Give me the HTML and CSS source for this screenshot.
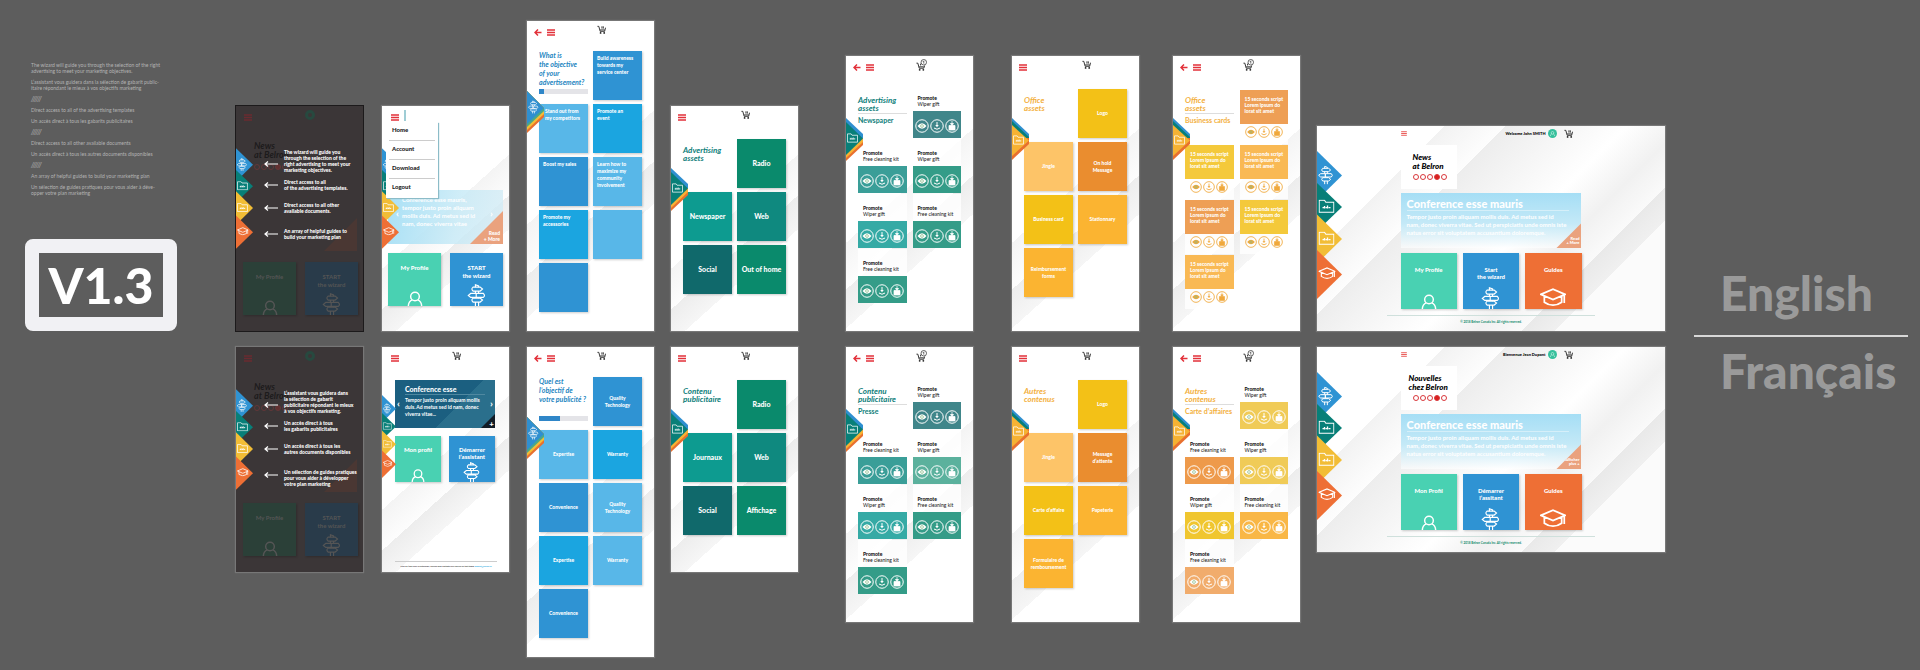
FILE: index.html
```html
<!DOCTYPE html>
<html lang="en">
<head>
<meta charset="utf-8">
<title>Belron screens V1.3</title>
<link rel="stylesheet" href="styles.css">
</head>
<body>
<svg class="defs" aria-hidden="true">
  <symbol id="burger" viewBox="0 0 16 14"><path d="M0 2h16M0 7h16M0 12h16" stroke="currentColor" stroke-width="2.6"/></symbol>
  <symbol id="back" viewBox="0 0 16 14"><path d="M15 7H3M8 1 2 7l6 6" fill="none" stroke="currentColor" stroke-width="3"/></symbol>
  <symbol id="cart" viewBox="0 0 20 20"><path d="M1 3h3l3 11h10l2-8M7 11h10M11 3v5M14 3v5" fill="none" stroke="currentColor" stroke-width="2"/><circle cx="8" cy="17.500" r="2" fill="currentColor"/><circle cx="16" cy="17.500" r="2" fill="currentColor"/></symbol>
  <symbol id="cartfull" viewBox="0 0 24 26"><path d="M1 9h3l3 11h10l2-6M7 17h10M10 10v4" fill="none" stroke="currentColor" stroke-width="2"/><circle cx="8" cy="23.500" r="2" fill="currentColor"/><circle cx="16" cy="23.500" r="2" fill="currentColor"/><circle cx="17" cy="7" r="6" fill="#fff" stroke="currentColor" stroke-width="1.500"/><path d="M15 6l2-2v6" fill="none" stroke="currentColor" stroke-width="1.400"/></symbol>
  <symbol id="sign" viewBox="0 0 24 28"><g fill="none" stroke="currentColor" stroke-width="1.500"><path d="M10 4V1l4 1.500V4M10 9v3M14 9v3M10 18v0M14 17v1M10 23v5M14 23v5"/><path d="M7 4h9l3 2.500L16 9H7q-3-2.500 0-5zM11 17H4l-3-2.500L4 12h7v5M11 12h9q3 2.500 0 5h-9zM16 18H7q-3 2.500 0 5h9l3-2.500z"/></g></symbol>
  <symbol id="person" viewBox="0 0 24 22"><g fill="none" stroke="currentColor" stroke-width="2.200"><circle cx="12" cy="8" r="6.500"/><path d="M2 23q0-8 6-10M22 23q0-8-6-10"/></g></symbol>
  <symbol id="cap" viewBox="0 0 30 22"><g fill="none" stroke="currentColor" stroke-width="2"><path d="M1 8 15 2l14 6-14 6zM5 10v7q10 7 20 0v-7M28 8v10"/></g></symbol>
  <symbol id="folder" viewBox="0 0 24 20"><path d="M1 19V1h8l2 3h12v15z" fill="none" stroke="currentColor" stroke-width="1.600"/><path d="M6 12h3M10.500 12h3M15 12h3M9 9.500v4M13.500 9v4.500" stroke="currentColor" stroke-width="2"/></symbol>
  <symbol id="pointer" viewBox="0 0 28 12"><path d="M28 6H2M8 1 2 6l6 5" fill="none" stroke="currentColor" stroke-width="2.400"/></symbol>
  <symbol id="eye" viewBox="0 0 28 28"><circle cx="14" cy="14" r="12.500" fill="none" stroke="currentColor" stroke-width="2"/><path d="M5 14q9-11 18 0-9 11-18 0z" fill="currentColor"/><circle cx="14" cy="14" r="2.800" fill="none" stroke="#8b8" stroke-width="1.500"/></symbol>
  <symbol id="down" viewBox="0 0 28 28"><circle cx="14" cy="14" r="12.500" fill="none" stroke="currentColor" stroke-width="2"/><path d="M14 6v8M8 18q6 5 12 0" fill="none" stroke="currentColor" stroke-width="2"/><path d="M10.500 12h7L14 16.500z" fill="currentColor"/></symbol>
  <symbol id="bag" viewBox="0 0 28 28"><circle cx="14" cy="14" r="12.500" fill="none" stroke="currentColor" stroke-width="2"/><path d="M8 13h12v9H8zM14 4v6M11 9h6l-3 4z" fill="currentColor" stroke="currentColor" stroke-width="1.500"/></symbol>
  <symbol id="flags" viewBox="0 0 50 296">
    <path d="M0 0 50 49 0 98z" fill="#2f93d3"/><path d="M0 64 50 112 0 160z" fill="#087f78"/><path d="M0 127 50 176 0 225z" fill="#f2bd36"/><path d="M0 198 50 247 0 296z" fill="#ee6f35"/>
    <g color="#fff"><use href="#sign" x="2" y="29" width="32" height="38"/><use href="#folder" x="3" y="97" width="32" height="27"/><use href="#folder" x="3" y="161" width="32" height="27"/><use href="#cap" x="3" y="231" width="34" height="26"/></g>
  </symbol>
  <symbol id="flag-wizard" viewBox="0 0 17 43"><path d="M0 0 17 17v9L0 42z" fill="#e8702f"/><path d="M0 0 17 17v6L0 39z" fill="#f3bd35"/><path d="M0 0 17 17v3L0 36z" fill="#4aa888"/><path d="M0 0 17 17 0 33z" fill="#2f8fd0"/><use href="#sign" x="1" y="9" width="11" height="14" color="#fff"/></symbol>
  <symbol id="flag-ads" viewBox="0 0 17 43"><path d="M0 0 17 16v4H0z" fill="#2f8fd0"/><path d="M0 20h17v7L0 43z" fill="#e8702f"/><path d="M0 20h17v4L0 40z" fill="#f9b233"/><path d="M0 4 17 20.500 0 37z" fill="#087f78"/><use href="#folder" x="1" y="15" width="11" height="10" color="#fff"/></symbol>
  <symbol id="flag-office" viewBox="0 0 17 43"><path d="M0 0 17 16v6H0z" fill="#2f8fd0"/><path d="M0 3 17 19v4H0z" fill="#087f78"/><path d="M0 20h17v6L0 42z" fill="#e8702f"/><path d="M0 7 17 22.500 0 38z" fill="#f6b233"/><use href="#folder" x="1" y="17" width="11" height="10" color="#fff"/></symbol>
</svg>

<main class="canvas">
  <section class="intro">
    <div class="notes">
      <p>The wizard will guide you through the selection of the right<br>advertising to meet your marketing objectives.</p>
      <p>L’assistant vous guidera dans la sélection de gabarit public-<br>itaire répondant le mieux à vos objectifs marketing</p>
      <p class="slashes">//////</p>
      <p>Direct access to all of the advertising templates</p>
      <p>Un accès direct à tous les gabarits publicitaires</p>
      <p class="slashes">//////</p>
      <p>Direct access to all other available documents</p>
      <p>Un accès direct à tous les autres documents disponibles</p>
      <p class="slashes">//////</p>
      <p>An array of helpful guides to build your marketing plan</p>
      <p>Un sélection de guides pratiques pour vous aider à déve-<br>opper votre plan marketing</p>
    </div>
    <h1 class="version">V1.3</h1>
  </section>

  <article class="board phone dark dark-en indent-l">
    <header class="bar"><button aria-label="Menu"><svg><use href="#burger"/></svg></button><span class="avatar"></span></header>
    <div class="dim">
      <h2>News<br>at Belron</h2><p class="dots"><i></i><i></i><i></i><i class="on"></i><i></i></p>
      <span class="corner"></span>
      <div class="duo"><a href="#" class="tile mint">My Profile<svg class="person"><use href="#person"/></svg></a><a href="#" class="tile blue">START<br>the wizard<svg class="sign"><use href="#sign"/></svg></a></div>
    </div>
    <ul class="guide">
      <li><svg><use href="#pointer"/></svg><p>The wizard will guide you<br>through the selection of the<br>right advertising to meet your<br>marketing objectives.</p></li>
      <li><svg><use href="#pointer"/></svg><p>Direct access to all<br>of the advertising templates.</p></li>
      <li><svg><use href="#pointer"/></svg><p>Direct access to all other<br>available documents.</p></li>
      <li><svg><use href="#pointer"/></svg><p>An array of helpful guides to<br>build your marketing plan</p></li>
    </ul>
    <svg class="flags"><use href="#flags"/></svg>
  </article>

  <article class="board phone indent-2">
    <header class="bar home"><button aria-label="Menu"><svg><use href="#burger"/></svg></button><span class="mark"></span></header>
    <section class="hero light">
      <p>Conference esse mauris,<br>tempor justo proin aliquam<br>mollis duis. Ad metus sed id<br>nam, donec viverra vitae</p>
      <button class="prev" aria-label="Previous">‹</button><button class="next" aria-label="Next">›</button>
      <a href="#" class="more">Read<br>+ More</a>
    </section>
    <div class="duo"><a href="#" class="tile mint">My Profile<svg class="person"><use href="#person"/></svg></a><a href="#" class="tile blue">START<br>the wizard<svg class="sign"><use href="#sign"/></svg></a></div>
    <svg class="flags"><use href="#flags"/></svg>
    <nav class="menu"><a href="#">Home</a><a href="#">Account</a><a href="#">Download</a><a href="#">Logout</a></nav>
  </article>

  <article class="board phone tall indent-1">
    <header class="bar"><button aria-label="Back"><svg><use href="#back"/></svg></button><button aria-label="Menu"><svg><use href="#burger"/></svg></button><button class="cart" aria-label="Cart"><svg><use href="#cart"/></svg></button></header>
    <div class="tiles question">
      <div class="head"><h2>What is<br>the objective<br>of your<br>advertisement?</h2><progress max="100" value="11"></progress></div>
      <a href="#" class="tile blue">Build awareness<br>towards my<br>service center</a>
      <a href="#" class="tile pale inset">Stand out from<br>my competitors</a><a href="#" class="tile cyan">Promote an<br>event</a>
      <a href="#" class="tile blue">Boost my sales</a><a href="#" class="tile pale">Learn how to<br>maximize my<br>community<br>involvement</a>
      <a href="#" class="tile cyan">Promote my<br>accessories</a><a href="#" class="tile pale"></a>
      <a href="#" class="tile blue"></a>
    </div>
    <svg class="flag low"><use href="#flag-wizard"/></svg>
  </article>

  <article class="board phone">
    <header class="bar"><button aria-label="Menu"><svg><use href="#burger"/></svg></button><button class="cart" aria-label="Cart"><svg><use href="#cart"/></svg></button></header>
    <div class="tiles big">
      <div class="head teal"><h2>Advertising<br>assets</h2></div><a href="#" class="tile g1">Radio</a>
      <a href="#" class="tile g2">Newspaper</a><a href="#" class="tile g3">Web</a>
      <a href="#" class="tile g4">Social</a><a href="#" class="tile g1">Out of home</a>
    </div>
    <svg class="flag"><use href="#flag-ads"/></svg>
  </article>

  <article class="board phone mid indent-m">
    <header class="bar"><button aria-label="Back"><svg><use href="#back"/></svg></button><button aria-label="Menu"><svg><use href="#burger"/></svg></button><button class="cart full" aria-label="Cart, 1 item"><svg><use href="#cartfull"/></svg></button></header>
    <div class="cards">
      <div class="head teal"><h2>Advertising<br>assets</h2><h3>Newspaper</h3></div>
      <div class="promo p1"><p><b>Promote</b><br>Wiper gift</p><div class="actions"></div></div>
      <div class="promo p2"><p><b>Promote</b><br>Free cleaning kit</p><div class="actions"></div></div>
      <div class="promo p3"><p><b>Promote</b><br>Wiper gift</p><div class="actions"></div></div>
      <div class="promo p4"><p><b>Promote</b><br>Wiper gift</p><div class="actions"></div></div>
      <div class="promo p3"><p><b>Promote</b><br>Free cleaning kit</p><div class="actions"></div></div>
      <div class="promo p3"><p><b>Promote</b><br>Free cleaning kit</p><div class="actions"></div></div>
    </div>
    <svg class="flag"><use href="#flag-ads"/></svg>
  </article>

  <article class="board phone mid indent-s">
    <header class="bar"><button aria-label="Menu"><svg><use href="#burger"/></svg></button><button class="cart" aria-label="Cart"><svg><use href="#cart"/></svg></button></header>
    <div class="tiles">
      <div class="head amber"><h2>Office<br>assets</h2></div><a href="#" class="tile o1">Logo</a>
      <a href="#" class="tile o2">Jingle</a><a href="#" class="tile o3">On hold<br>Message</a>
      <a href="#" class="tile o1">Business card</a><a href="#" class="tile o4">Stationnary</a>
      <a href="#" class="tile o4">Reimbursement<br>forms</a>
    </div>
    <svg class="flag"><use href="#flag-office"/></svg>
  </article>

  <article class="board phone mid indent-xs">
    <header class="bar"><button aria-label="Back"><svg><use href="#back"/></svg></button><button aria-label="Menu"><svg><use href="#burger"/></svg></button><button class="cart full" aria-label="Cart, 1 item"><svg><use href="#cartfull"/></svg></button></header>
    <div class="cards scripts">
      <div class="head amber"><h2>Office<br>assets</h2><h3>Business cards</h3></div>
      <div class="script s1"><p>15 seconds script<br>Lorem ipsum do<br>lorat sit amet</p><div class="actions"></div></div>
      <div class="script s2"><p>15 seconds script<br>Lorem ipsum do<br>lorat sit amet</p><div class="actions"></div></div>
      <div class="script s3"><p>15 seconds script<br>Lorem ipsum do<br>lorat sit amet</p><div class="actions"></div></div>
      <div class="script s1"><p>15 seconds script<br>Lorem ipsum do<br>lorat sit amet</p><div class="actions"></div></div>
      <div class="script s2"><p>15 seconds script<br>Lorem ipsum do<br>lorat sit amet</p><div class="actions"></div></div>
      <div class="script s3"><p>15 seconds script<br>Lorem ipsum do<br>lorat sit amet</p><div class="actions"></div></div>
    </div>
    <svg class="flag"><use href="#flag-office"/></svg>
  </article>

  <article class="board desktop">
    <header class="topbar"><button class="red" aria-label="Menu"><svg><use href="#burger"/></svg></button><span class="hello">Welcome John SMITH</span><span class="avatar"><svg><use href="#person"/></svg></span><button class="cart" aria-label="Cart"><svg><use href="#cart"/></svg></button></header>
    <div class="news"><h2>News<br>at Belron</h2><p class="dots"><i></i><i></i><i></i><i class="on"></i><i></i></p></div>
    <section class="wide">
      <h3>Conference esse mauris</h3>
      <p>Tempor justo proin aliquam mollis duis. Ad metus sed id<br>nam, donec viverra vitae. Sed ut perspiciatis unde omnis iste<br>natus error sit voluptatem accusantium doloremque.</p>
      <a href="#" class="more">Read<br>+ More</a>
    </section>
    <div class="trio"><a href="#" class="tile mint">My Profile<svg class="person"><use href="#person"/></svg></a><a href="#" class="tile blue">Start<br>the wizard<svg class="sign"><use href="#sign"/></svg></a><a href="#" class="tile orange">Guides<svg class="cap"><use href="#cap"/></svg></a></div>
    <footer>© 2018 Belron Canada Inc. All rights reserved.</footer>
    <svg class="flags"><use href="#flags"/></svg>
  </article>

  <section class="languages">
    <h2>English</h2>
    <hr>
    <h2 lang="fr">Français</h2>
  </section>

  <article class="board phone dark indent-l row-start" lang="fr">
    <header class="bar"><button aria-label="Menu"><svg><use href="#burger"/></svg></button><span class="avatar"></span></header>
    <div class="dim">
      <h2>News<br>at Belron</h2><p class="dots"><i></i><i></i><i></i><i class="on"></i><i></i></p>
      <span class="corner"></span>
      <div class="duo"><a href="#" class="tile mint">My Profile<svg class="person"><use href="#person"/></svg></a><a href="#" class="tile blue">START<br>the wizard<svg class="sign"><use href="#sign"/></svg></a></div>
    </div>
    <ul class="guide">
      <li><svg><use href="#pointer"/></svg><p>L’assistant vous guidera dans<br>la sélection de gabarit<br>publicitaire répondant le mieux<br>à vos objectifs marketing.</p></li>
      <li><svg><use href="#pointer"/></svg><p>Un accès direct à tous<br>les gabarits publicitaires</p></li>
      <li><svg><use href="#pointer"/></svg><p>Un accès direct à tous les<br>autres documents disponibles</p></li>
      <li><svg><use href="#pointer"/></svg><p>Un sélection de guides pratiques<br>pour vous aider à développer<br>votre plan marketing</p></li>
    </ul>
    <svg class="flags"><use href="#flags"/></svg>
  </article>

  <article class="board phone compact indent-2" lang="fr">
    <header class="bar home"><button aria-label="Menu"><svg><use href="#burger"/></svg></button><button class="cart" aria-label="Panier"><svg><use href="#cart"/></svg></button></header>
    <section class="hero deep">
      <h3>Conference esse</h3>
      <p>Tempor justo proin aliquam mollis<br>duis. Ad metus sed id nam, donec<br>viverra vitae...</p>
      <button class="prev" aria-label="Précédent">‹</button><button class="next" aria-label="Suivant">›</button>
      <a href="#" class="more" aria-label="Afficher plus">+</a>
    </section>
    <div class="duo"><a href="#" class="tile mint">Mon profil<svg class="person"><use href="#person"/></svg></a><a href="#" class="tile blue">Démarrer<br>l’assistant<svg class="sign"><use href="#sign"/></svg></a></div>
    <footer>Pour de l’aide avec la plateforme, veuillez nous contacter par courriel en tout temps <a href="#">support@belron.ca</a></footer>
    <svg class="flags"><use href="#flags"/></svg>
  </article>

  <article class="board phone tall indent-1" lang="fr">
    <header class="bar"><button aria-label="Retour"><svg><use href="#back"/></svg></button><button aria-label="Menu"><svg><use href="#burger"/></svg></button><button class="cart" aria-label="Panier"><svg><use href="#cart"/></svg></button></header>
    <div class="tiles">
      <div class="head quiz"><h2>Quel est<br>l’objectif de<br>votre publicité ?</h2><progress max="100" value="42"></progress></div><a href="#" class="tile blue">Quality<br>Technology</a>
      <a href="#" class="tile pale">Expertise</a><a href="#" class="tile cyan">Warranty</a>
      <a href="#" class="tile blue">Convenience</a><a href="#" class="tile pale">Quality<br>Technology</a>
      <a href="#" class="tile cyan">Expertise</a><a href="#" class="tile pale">Warranty</a>
      <a href="#" class="tile blue">Convenience</a>
    </div>
    <svg class="flag low"><use href="#flag-wizard"/></svg>
  </article>

  <article class="board phone" lang="fr">
    <header class="bar"><button aria-label="Menu"><svg><use href="#burger"/></svg></button><button class="cart" aria-label="Panier"><svg><use href="#cart"/></svg></button></header>
    <div class="tiles big">
      <div class="head teal"><h2>Contenu<br>publicitaire</h2></div><a href="#" class="tile g1">Radio</a>
      <a href="#" class="tile g2">Journaux</a><a href="#" class="tile g3">Web</a>
      <a href="#" class="tile g4">Social</a><a href="#" class="tile g1">Affichage</a>
    </div>
    <svg class="flag"><use href="#flag-ads"/></svg>
  </article>

  <article class="board phone mid indent-m" lang="fr">
    <header class="bar"><button aria-label="Retour"><svg><use href="#back"/></svg></button><button aria-label="Menu"><svg><use href="#burger"/></svg></button><button class="cart full" aria-label="Panier, 1 article"><svg><use href="#cartfull"/></svg></button></header>
    <div class="cards">
      <div class="head teal"><h2>Contenu<br>publicitaire</h2><h3>Presse</h3></div>
      <div class="promo p1"><p><b>Promote</b><br>Wiper gift</p><div class="actions"></div></div>
      <div class="promo p2"><p><b>Promote</b><br>Free cleaning kit</p><div class="actions"></div></div>
      <div class="promo p5"><p><b>Promote</b><br>Wiper gift</p><div class="actions"></div></div>
      <div class="promo p4"><p><b>Promote</b><br>Wiper gift</p><div class="actions"></div></div>
      <div class="promo p3"><p><b>Promote</b><br>Free cleaning kit</p><div class="actions"></div></div>
      <div class="promo p3"><p><b>Promote</b><br>Free cleaning kit</p><div class="actions"></div></div>
    </div>
    <svg class="flag"><use href="#flag-ads"/></svg>
  </article>

  <article class="board phone mid indent-s" lang="fr">
    <header class="bar"><button aria-label="Menu"><svg><use href="#burger"/></svg></button><button class="cart" aria-label="Panier"><svg><use href="#cart"/></svg></button></header>
    <div class="tiles">
      <div class="head amber"><h2>Autres<br>contenus</h2></div><a href="#" class="tile o1">Logo</a>
      <a href="#" class="tile o2">Jingle</a><a href="#" class="tile o3">Message<br>d’attente</a>
      <a href="#" class="tile o1">Carte d’affaire</a><a href="#" class="tile o4">Papeterie</a>
      <a href="#" class="tile o4">Formulaire de<br>remboursement</a>
    </div>
    <svg class="flag"><use href="#flag-office"/></svg>
  </article>

  <article class="board phone mid indent-xs" lang="fr">
    <header class="bar"><button aria-label="Retour"><svg><use href="#back"/></svg></button><button aria-label="Menu"><svg><use href="#burger"/></svg></button><button class="cart full" aria-label="Panier, 1 article"><svg><use href="#cartfull"/></svg></button></header>
    <div class="cards">
      <div class="head amber"><h2>Autres<br>contenus</h2><h3>Carte d’affaires</h3></div>
      <div class="promo y1"><p><b>Promote</b><br>Wiper gift</p><div class="actions"></div></div>
      <div class="promo y2"><p><b>Promote</b><br>Free cleaning kit</p><div class="actions"></div></div>
      <div class="promo y1"><p><b>Promote</b><br>Wiper gift</p><div class="actions"></div></div>
      <div class="promo y3"><p><b>Promote</b><br>Wiper gift</p><div class="actions"></div></div>
      <div class="promo y4"><p><b>Promote</b><br>Free cleaning kit</p><div class="actions"></div></div>
      <div class="promo y5"><p><b>Promote</b><br>Free cleaning kit</p><div class="actions"></div></div>
    </div>
    <svg class="flag"><use href="#flag-office"/></svg>
  </article>

  <article class="board desktop" lang="fr">
    <header class="topbar"><button class="red" aria-label="Menu"><svg><use href="#burger"/></svg></button><span class="hello">Bienvenue Jean Dupont</span><span class="avatar"><svg><use href="#person"/></svg></span><button class="cart" aria-label="Panier"><svg><use href="#cart"/></svg></button></header>
    <div class="news longer"><h2>Nouvelles<br>chez Belron</h2><p class="dots"><i></i><i></i><i></i><i class="on"></i><i></i></p></div>
    <section class="wide">
      <h3>Conference esse mauris</h3>
      <p>Tempor justo proin aliquam mollis duis. Ad metus sed id<br>nam, donec viverra vitae. Sed ut perspiciatis unde omnis iste<br>natus error sit voluptatem accusantium doloremque.</p>
      <a href="#" class="more">Afficher<br>plus +</a>
    </section>
    <div class="trio"><a href="#" class="tile mint">Mon Profil<svg class="person"><use href="#person"/></svg></a><a href="#" class="tile blue">Démarrer<br>l’assitant<svg class="sign"><use href="#sign"/></svg></a><a href="#" class="tile orange">Guides<svg class="cap"><use href="#cap"/></svg></a></div>
    <footer>© 2018 Belron Canada Inc. All rights reserved.</footer>
    <svg class="flags"><use href="#flags"/></svg>
  </article>
</main>
<script src="script.js"></script>
</body>
</html>
```
FILE: script.js
```js
// Every card carries the same three actions: preview, download, order.
const actions = [['eye', 'Preview'], ['down', 'Download'], ['bag', 'Order']];
document.querySelectorAll('.actions').forEach((row) => {
  row.innerHTML = actions
    .map(([icon, label]) => `<button aria-label="${label}"><svg><use href="#${icon}"/></svg></button>`)
    .join('');
});
```
FILE: styles.css
```css
* { box-sizing: border-box; margin: 0; padding: 0; }
body { background: #5d5d5d; font-family: Lato, "Liberation Sans", sans-serif; min-height: 100vh; }
a { color: inherit; text-decoration: none; }
button { display: block; border: 0; background: none; color: inherit; font: inherit; line-height: 1; }
svg { display: block; }
ul { list-style: none; }
.defs { position: absolute; width: 0; height: 0; }

.canvas {
  display: grid;
  grid-template-columns:
    minmax(0, 152fr) minmax(0, 169fr) minmax(0, 129fr) minmax(0, 128fr) minmax(0, 127fr)
    minmax(0, 158fr) minmax(0, 149fr) minmax(0, 144fr) minmax(0, 348fr) minmax(0, 226fr);
  grid-template-rows: auto auto;
  gap: 16px 17px;
  padding: 21px 12px 14px 25px;
}
.intro { grid-area: 1 / 1; display: flex; flex-direction: column; justify-content: space-between; padding-top: 41px; }
.languages { grid-area: 1 / 10 / 3 / 11; align-self: center; margin-left: 12px; padding-bottom: 14px; }
.indent-l { margin-left: 42px; }
.indent-m { margin-left: 31px; }
.indent-s { margin-left: 22px; }
.indent-xs { margin-left: 17px; }
.indent-2 { margin-left: 2px; }
.indent-1 { margin-left: 1px; }

.notes { display: grid; gap: 5px; padding-left: 6px; color: #b4b4b4; font-size: 5px; line-height: 6px; white-space: nowrap; }
.slashes { font-size: 7px; font-style: italic; }
.version { border: 14px solid #f1f1f4; border-radius: 8px; color: #fff; font-size: 50px; font-weight: 900; line-height: 64px; text-align: center; }
.languages h2 { padding-left: 26px; color: #9a9a9a; font-size: 48px; font-weight: 900; line-height: 56px; }
.languages hr { height: 2px; margin: 14px 0 6px; border: 0; background: #d8d8d8; }

.board {
  position: relative;
  align-self: start;
  overflow: hidden;
  box-shadow: 0 0 1px 1px #777;
  background: linear-gradient(138deg, #fff 48%, #f4f4f4 48%, #fdfdfd 60%, #ededed 60%, #f6f6f6 70%, #fff 70%);
}
.board:nth-of-type(-n+8) { align-self: end; }
.row-start { grid-column: 2; }
.phone { min-height: 225px; }
.phone.mid { min-height: 275px; }
.phone.tall { min-height: 310px; padding-bottom: 14px; }

.bar { display: flex; gap: 5px; height: 17px; padding: 6px 7px 0; color: #e2313a; }
.bar svg { width: 8px; height: 7px; }
.bar.home { padding-left: 9px; }
.bar .cart { position: absolute; left: 55%; top: 4px; }
.cart { color: #222; }
.bar .cart svg, .topbar .cart svg { width: 9px; height: 9px; }
.bar .cart.full { top: 3px; }
.bar .cart.full svg { width: 11px; height: 12px; }
.mark { width: 2px; height: 11px; margin-top: -2px; background: #9fcdd5; }

.tile { display: flex; flex-direction: column; align-items: center; justify-content: center; aspect-ratio: 1; color: #fff; font-size: 5px; font-weight: 900; line-height: 7px; text-align: center; box-shadow: 1px 1px 2px #0003; }
.blue { background: #2f93d3; }
.pale { background: #58b7e8; }
.cyan { background: #1ba5e0; }
.mint { background: #49d1b2; }
.orange { background: #ee6f35; }
.g1 { background: #0a8a6c; }
.g2 { background: #0d9b90; }
.g3 { background: #0f897f; }
.g4 { background: #10696b; }
.o1 { background: #f3c117; }
.o2 { background: #fdc468; }
.o3 { background: #ea8d2f; }
.o4 { background: #fbb431; }

.tiles { display: grid; grid-template-columns: 1fr 1fr; gap: 4px 5px; padding: 16px 12px 0; }
.big .tile { font-size: 7px; }
.tall .tiles { padding-top: 13px; }
.question .tile { align-items: flex-start; justify-content: flex-start; padding: 4px; text-align: left; }
.question .inset { padding-left: 6px; }
.head { color: #2686bf; white-space: nowrap; }
.tiles .head { padding-top: 7px; }
.head h2 { font-size: 8px; font-style: italic; font-weight: 700; line-height: 8px; }
.head h3 { margin-top: 1px; padding-top: 2px; border-top: 1px solid #ddd; font-size: 7px; line-height: 9px; }
.head.teal { color: #0f807b; }
.head.amber { color: #f3b03e; }
.tall .tiles .head { padding-top: 0; }
.question .head h2 { font-size: 7px; line-height: 9px; }
.quiz h2 { margin-bottom: 12px; font-size: 7px; line-height: 9px; }
progress { display: block; width: 100%; height: 5px; margin-top: 2px; border: 0; appearance: none; }
progress::-webkit-progress-bar { background: #e4e4e8; }
progress::-webkit-progress-value { background: #2f86c8; }

.cards { display: grid; grid-template-columns: 1fr 1fr; gap: 1px 6px; padding: 11px 12px 0; }
.cards .head { padding-top: 12px; }
.promo { display: flex; flex-direction: column; height: 54px; color: #111; background: #fffc; font-size: 5px; line-height: 6px; white-space: nowrap; }
.promo p { flex: 1; padding: 11px 0 0 5px; }
.promo b { font-weight: 900; }
.actions { display: flex; align-items: center; justify-content: center; gap: 1px; color: #fff; }
.actions svg { width: 14px; height: 14px; }
.promo .actions { height: 27px; padding-top: 2px; background: var(--tone); }
.p1 { --tone: #40868a; }
.p2 { --tone: #3a9e98; }
.p3 { --tone: #349c88; }
.p4 { --tone: #35aaa5; }
.p5 { --tone: #5bb19d; }
.y1 { --tone: #f0cb57; }
.y2 { --tone: #ee9a4b; }
.y3 { --tone: #f0c62f; }
.y4 { --tone: #f9b746; }
.y5 { --tone: #f1ac6c; }
.scripts { padding-top: 17px; }
.scripts .head { padding-top: 6px; }
.script { background: #fffc; }
.script p { height: 34px; padding: 6px 0 0 5px; color: #fff; background: var(--tone); font-size: 5px; font-weight: 900; line-height: 6px; white-space: nowrap; }
.script .actions { height: 20px; padding-bottom: 4px; color: #f0a83c; }
.script .actions svg { width: 12px; height: 12px; }
.s1 { --tone: #ee9f55; }
.s2 { --tone: #f4c93b; }
.s3 { --tone: #f9b954; }

.flags { position: absolute; left: 0; top: 42px; width: 17px; height: 101px; }
.flag { position: absolute; left: 0; top: 62px; width: 17px; height: 43px; }
.flag.low { top: 70px; }

.duo { display: grid; grid-template-columns: 1fr 1fr; gap: 9px; padding: 0 6px; }
.duo .tile, .trio .tile { justify-content: flex-start; padding-top: 11px; font-size: 6px; line-height: 8px; }
.duo .tile svg, .trio .tile svg { margin-top: auto; }
.tile .person { width: 16px; height: 15px; }
.tile .sign { width: 20px; height: 22px; }
.tile .cap { width: 26px; height: 20px; margin-bottom: 2px; }

.hero { position: relative; margin: 67px 6px 9px; }
.hero.light { height: 54px; padding: 6px 0 0 14px; background: linear-gradient(100deg, #a9e0f5, #c5e9f6cc 60%, #d5ecf5cc); color: #fff; font-size: 6px; font-weight: 700; line-height: 8px; white-space: nowrap; }
.hero button { position: absolute; top: 18px; color: #fff; font-size: 10px; }
.prev { left: 8px; }
.next { right: 10px; }
.more { position: absolute; right: 0; bottom: 0; width: 33px; height: 33px; padding: 19px 3px 0 0; background: #eaa27e; clip-path: polygon(100% 0, 100% 100%, 0 100%); color: #fff; font-size: 5px; font-weight: 900; line-height: 6px; text-align: right; }
.menu { position: absolute; left: 4px; top: 16px; width: 52px; padding: 0 3px; background: #fff; box-shadow: 1px 1px 1px #8cbcc8; }
.menu a { display: block; height: 19px; padding-left: 3px; border-bottom: 1px solid #ccc; color: #222; font-size: 6px; font-weight: 900; line-height: 15px; }
.menu a:last-child { border: 0; }

.compact { display: flex; flex-direction: column; }
.compact .hero { margin: 16px 14px 8px 13px; }
.hero.deep { height: 48px; padding: 5px 0 0 10px; background: linear-gradient(135deg, #1b5f80 60%, #2a6f8c 60%); color: #fff; font-size: 5px; font-weight: 700; line-height: 7px; white-space: nowrap; }
.deep h3 { margin: 0 10px 2px 0; border-bottom: 1px solid #4f88a0; font-size: 7px; font-weight: 900; line-height: 9px; }
.deep .prev { left: 2px; }
.deep .next { right: 2px; }
.deep .more { width: 14px; height: 14px; padding: 6px 1px 0 0; background: #111c26; font-size: 8px; line-height: 8px; }
.compact .duo { gap: 8px; padding: 0 14px 0 13px; }
.compact .tile { padding-top: 10px; line-height: 7px; }
.compact .tile .sign { width: 18px; height: 20px; }
.compact .tile .person { width: 14px; height: 13px; }
.compact .flags { top: 48px; width: 14px; height: 83px; }
.compact footer { margin: auto 12px 4px 13px; padding: 2px 0 0; border-top: 1px solid #ccc; color: #333; font-size: 2px; font-weight: 700; line-height: 4px; text-align: center; }
.compact footer a { color: #1ba5e0; }

.dark { background: #3b3637; color: #222; }
.dark-en { box-shadow: 0 0 0 1px #1c1a1b; }
.dark .bar { padding-left: 8px; color: #6b2b30; }
.dark .avatar { width: 10px; height: 10px; margin: -2px 0 0 48px; border: 3px solid #27493f; border-radius: 50%; }
.dim { padding-top: 18px; }
.dim h2 { padding-left: 18px; color: #1d1b1c; font-size: 9px; font-style: italic; line-height: 9px; }
.dim .dots { padding: 5px 0 0 18px; opacity: .25; }
.dim .corner { display: block; width: 33px; height: 33px; margin: 48px 6px 11px auto; background: #4a3733; clip-path: polygon(100% 0, 100% 100%, 0 100%); }
.dim .duo { padding: 0 5px 0 7px; }
.dim .tile { color: #555; font-weight: 700; }
.dim .mint { background: #2b4038; }
.dim .blue { background: #293b4a; }
.guide { position: absolute; left: 28px; top: 43px; display: grid; grid-template-rows: 30px 23px 26px auto; color: #fff; font-size: 5px; font-weight: 900; line-height: 6px; white-space: nowrap; }
.guide li { display: flex; align-items: flex-start; gap: 6px; }
.guide svg { width: 14px; height: 6px; margin-top: 3px; }
.guide li:first-child svg { margin-top: 12px; }

.desktop {
  display: flex; flex-direction: column; min-height: 205px; padding: 0 24%;
  background: linear-gradient(135deg, #fff 23%, #f2f2f2 23%, #fdfdfd 34%, #ededed 34%, #fff 56%, #f1f1f1 66%, #fafafa 74%, #e9e9e9 74%, #f0f0f0 80%, #fbfbfb 80%);
}
.topbar { display: flex; align-items: center; height: 15px; margin-right: 8px; gap: 3px; }
.topbar .red { margin-right: auto; color: #e8524f; }
.topbar .red svg { width: 6px; height: 5px; }
.topbar .cart { margin-left: 4px; }
.hello { font-size: 4px; font-weight: 900; white-space: nowrap; }
.topbar .avatar { width: 9px; height: 9px; padding: 2px; border-radius: 50%; background: #35c09c; color: #fff; }
.topbar .avatar svg { width: 5px; height: 5px; }
.news { align-self: flex-start; width: 56px; height: 44px; margin: 4px 0; padding: 8px 0 0 12px; background: #fff; white-space: nowrap; }
.news h2 { font-size: 8px; font-style: italic; font-weight: 900; line-height: 9px; }
.longer { padding-left: 8px; }
.longer .dots { padding-left: 4px; }
.dots { display: flex; gap: 1px; padding-top: 3px; }
.dots i { width: 6px; height: 6px; border: 1px solid #d9383c; border-radius: 50%; }
.dots .on { background: #d8201f; }
.wide { position: relative; height: 55px; padding: 4px 6px 0; background: linear-gradient(#a5def5, #c4e9f7 55%, #fff9); color: #fff; white-space: nowrap; }
.wide h3 { margin-right: 6px; border-bottom: 1px solid #d5eff9; font-size: 11px; font-weight: 900; line-height: 13px; }
.wide p { padding-top: 2px; font-size: 6px; font-weight: 700; line-height: 8px; }
.wide .more { width: 25px; height: 25px; padding: 14px 2px 0 0; font-size: 4px; line-height: 4px; }
.trio { display: grid; grid-template-columns: repeat(3, 1fr); gap: 6px; padding-top: 5px; }
.trio .tile { padding-top: 13px; line-height: 7px; }
.desktop footer { margin: 6px -14px 0; padding-top: 4px; border-top: 1px solid #cfe0dc; color: #0f8a6c; font-size: 3px; font-weight: 700; line-height: 4px; text-align: center; }
.desktop .flags { top: 25px; width: 25px; height: 148px; }
```
